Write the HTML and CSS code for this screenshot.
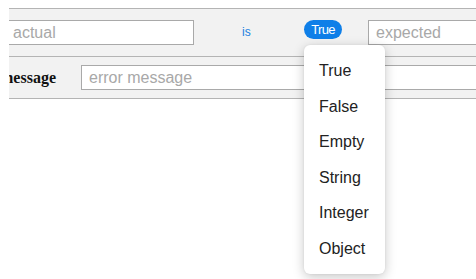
FILE: index.html
```html
<!DOCTYPE html>
<html>
<head>
<meta charset="utf-8">
<link rel="stylesheet" href="styles.css">
</head>
<body>
<div class="page">
  <div class="scroller">
    <div class="table">
      <div class="row row-assert">
        <input class="field field-actual" type="text" placeholder="actual">
        <span class="op">is</span>
        <button class="pill">True</button>
        <input class="field field-expected" type="text" placeholder="expected">
      </div>
      <div class="row row-message">
        <label class="label">message</label>
        <input class="field field-message" type="text" placeholder="error message">
      </div>
    </div>
  </div>
  <ul class="menu">
    <li class="menu-item">True</li>
    <li class="menu-item">False</li>
    <li class="menu-item">Empty</li>
    <li class="menu-item">String</li>
    <li class="menu-item">Integer</li>
    <li class="menu-item">Object</li>
  </ul>
</div>
</body>
</html>
```
FILE: styles.css
```css
html, body {
  margin: 0;
  padding: 0;
  background: #ffffff;
  width: 476px;
  height: 279px;
  overflow: hidden;
}

.page {
  position: relative;
  padding: 8px 0 0 9px;
  height: 279px;
  box-sizing: border-box;
}

.scroller {
  overflow: hidden;
  border-top: 1px solid #b4b4b4;
}

.table {
  margin-left: -20px;
  width: 720px;
}

.row {
  display: flex;
  background: #f2f2f2;
  border-bottom: 1px solid #b4b4b4;
  box-sizing: border-box;
}

.row-assert {
  align-items: flex-start;
  padding: 11px 0;
}

.row-message {
  align-items: center;
  padding: 8px 0;
}

.field {
  height: 25px;
  box-sizing: border-box;
  border: 1px solid #a9a9a9;
  background: #ffffff;
  margin: 0;
  padding: 0 7px;
  font-family: "Liberation Sans", Arial, sans-serif;
  font-size: 16px;
  color: #222;
  outline: none;
  border-radius: 0;
}

.field::placeholder {
  color: #a8a8a8;
}

.field-actual {
  flex: 0 0 auto;
  width: 191px;
  margin-left: 14px;
  padding-left: 9px;
}

.field-expected {
  flex: 0 0 auto;
  width: 220px;
  margin-left: 26px;
}

.field-message {
  flex: 0 0 auto;
  width: 460px;
}

.op {
  flex: 0 0 auto;
  display: block;
  width: 14px;
  margin-left: 48px;
  line-height: 25px;
  font-family: "Liberation Sans", Arial, sans-serif;
  font-size: 12px;
  color: #1a7fe0;
}

.pill {
  flex: 0 0 auto;
  width: 38px;
  height: 19px;
  margin: 0 0 0 48px;
  padding: 0;
  border: none;
  border-radius: 10px;
  background: #0f7fe8;
  color: #ffffff;
  font-family: "Liberation Sans", Arial, sans-serif;
  font-size: 13px;
  letter-spacing: -0.7px;
  line-height: 19px;
  text-align: center;
}

.label {
  flex: 0 0 auto;
  width: 81px;
  padding-left: 11px;
  font-family: "Liberation Serif", "Times New Roman", serif;
  font-weight: bold;
  font-size: 16px;
  color: #111;
}

.menu {
  position: absolute;
  left: 304px;
  top: 45px;
  width: 81px;
  margin: 0;
  padding: 8px 0;
  list-style: none;
  background: #ffffff;
  border-radius: 6px;
  box-shadow: 0 3px 12px rgba(0, 0, 0, 0.22), 0 0 2px rgba(0, 0, 0, 0.08);
  box-sizing: border-box;
}

.menu-item {
  height: 35.5px;
  line-height: 35.5px;
  padding-left: 15px;
  font-family: "Liberation Sans", Arial, sans-serif;
  font-size: 16px;
  color: #222;
}
```
